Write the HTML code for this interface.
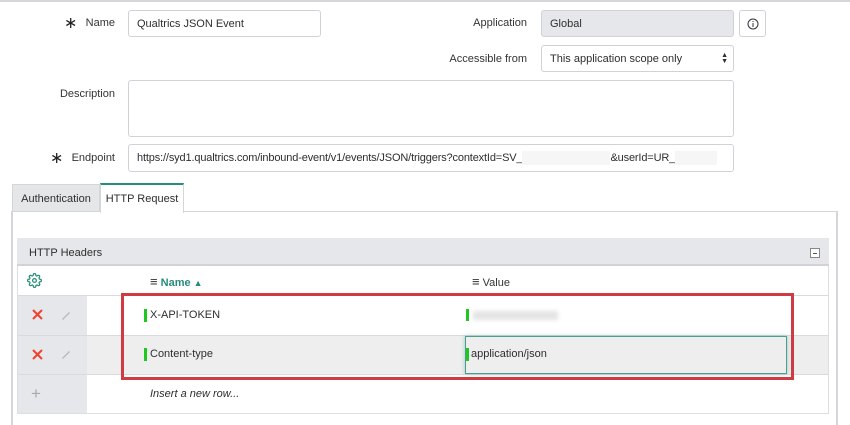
<!DOCTYPE html>
<html><head><meta charset="utf-8"><style>
*{box-sizing:border-box;margin:0;padding:0}
body{width:850px;height:425px;background:#fff;font-family:"Liberation Sans",sans-serif;font-size:11px;color:#2e2e2e;position:relative;overflow:hidden}
.a{position:absolute}
.lbl{position:absolute;text-align:right;font-size:11px;color:#333}
.inp{position:absolute;border:1px solid #cfd2d6;border-radius:3px;background:#fff;padding-left:8px;font-size:11px;display:flex;align-items:center;white-space:nowrap;overflow:hidden}
.star{position:absolute;font-size:16px;line-height:16px;color:#222;font-weight:300}
</style></head><body>
<div class="a" style="left:0;top:0;width:850px;height:2px;background:#d4d6d9"></div>

<span class="star" style="left:64px;top:16px">&#x2217;</span>
<div class="lbl" style="left:60px;top:17px;width:55px">Name</div>
<div class="inp" style="left:128px;top:10px;width:193px;height:27px">Qualtrics JSON Event</div>

<div class="lbl" style="left:420px;top:17px;width:107px">Application</div>
<div class="inp" style="left:541px;top:10px;width:193px;height:27px;background:#e6e7ea">Global</div>
<div class="inp" style="left:739px;top:10px;width:27px;height:27px;padding:0;justify-content:center"><svg width="12" height="12" viewBox="0 0 12 12"><circle cx="6" cy="6" r="5" fill="none" stroke="#333" stroke-width="1"/><rect x="5.5" y="5" width="1" height="4" fill="#333"/><rect x="5.5" y="3" width="1" height="1" fill="#333"/></svg></div>

<div class="lbl" style="left:400px;top:53px;width:127px">Accessible from</div>
<div class="inp" style="left:541px;top:45px;width:193px;height:27px">This application scope only<span class="a" style="right:5px;top:7px;font-size:7px;line-height:6px">&#9650;<br>&#9660;</span></div>

<div class="lbl" style="left:40px;top:88px;width:75px">Description</div>
<div class="inp" style="left:128px;top:80px;width:606px;height:57px"></div>

<span class="star" style="left:50px;top:151px">&#x2217;</span>
<div class="lbl" style="left:60px;top:152px;width:55px">Endpoint</div>
<div class="inp" style="left:128px;top:144px;width:606px;height:28px;letter-spacing:-0.15px">https://syd1.qualtrics.com/inbound-event/v1/events/JSON/triggers?contextId=SV_<span style="display:inline-block;width:88px;height:14px;background:#f6f6f6"></span>&amp;userId=UR_<span style="display:inline-block;width:42px;height:14px;background:#f6f6f6"></span></div>

<!-- tabs -->
<div class="a" style="left:12px;top:184px;width:88px;height:28px;background:#e5e6e8;border:1px solid #d4d6d9;border-bottom:none;display:flex;align-items:center;justify-content:center">Authentication</div>
<div class="a" style="left:12px;top:211px;width:88px;height:1px;background:#d4d6d9"></div>
<div class="a" style="left:100px;top:183px;width:84px;height:30px;background:#fff;border:1px solid #d4d6d9;border-top:2px solid #278c7a;border-bottom:none;display:flex;align-items:center;justify-content:center">HTTP Request</div>
<div class="a" style="left:184px;top:211px;width:654px;height:1px;background:#d4d6d9"></div>
<div class="a" style="left:11px;top:211px;width:2px;height:214px;background:#d4d6d9"></div>
<div class="a" style="left:836px;top:211px;width:2px;height:214px;background:#d4d6d9"></div>

<!-- panel -->
<div class="a" style="left:17px;top:238px;width:812px;height:176px;border:1px solid #dcdee1;background:#fff"></div>
<div class="a" style="left:17px;top:238px;width:812px;height:28px;background:#e6e7ea;border-bottom:2px solid #d0d2d5"></div>
<div class="a" style="left:29px;top:247px">HTTP Headers</div>
<div class="a" style="left:810px;top:248px;width:10px;height:10px;border:1px solid #888;background:#fff"><div style="margin:3.5px 2px;height:1px;background:#555"></div></div>

<svg class="a" style="left:27px;top:273px" width="15" height="15" viewBox="0 0 24 24" fill="none" stroke="#278c7a" stroke-width="2"><circle cx="12" cy="12" r="3"/><path d="M19.4 15a1.65 1.65 0 0 0 .33 1.820l.06.06a2 2 0 1 1-2.83 2.83l-.06-.06a1.65 1.65 0 0 0-1.82-.33 1.65 1.65 0 0 0-1 1.51V21a2 2 0 1 1-4 0v-.09A1.650 1.650 0 0 0 9 19.4a1.65 1.65 0 0 0-1.82.33l-.06.06a2 2 0 1 1-2.83-2.830l.06-.06A1.65 1.65 0 0 0 4.68 15a1.65 1.65 0 0 0-1.51-1H3a2 2 0 1 1 0-4h.09A1.65 1.65 0 0 0 4.6 9a1.65 1.65 0 0 0-.33-1.82l-.06-.06a2 2 0 1 1 2.83-2.83l.06.06A1.65 1.65 0 0 0 9 4.68a1.65 1.65 0 0 0 1-1.51V3a2 2 0 1 1 4 0v.09a1.65 1.65 0 0 0 1 1.51 1.65 1.65 0 0 0 1.82-.33l.06-.06a2 2 0 1 1 2.83 2.83l-.06.06A1.65 1.65 0 0 0 19.4 9a1.65 1.65 0 0 0 1.51 1H21a2 2 0 1 1 0 4h-.09a1.65 1.65 0 0 0-1.51 1z"/></svg>
<div class="a" style="left:150px;top:274px;color:#278c7a;font-weight:bold"><span style="color:#333;font-size:13px">&#8801;</span> Name <span style="font-size:9px">&#9650;</span></div>
<div class="a" style="left:472px;top:274px;color:#333"><span style="font-size:13px">&#8801;</span> Value</div>

<div class="a" style="left:18px;top:295px;width:810px;height:1px;background:#d8dadd"></div>
<div class="a" style="left:18px;top:296px;width:69px;height:117px;background:#e6e7ea"></div>
<div class="a" style="left:87px;top:336px;width:741px;height:39px;background:#eeeeee"></div>
<div class="a" style="left:18px;top:335px;width:810px;height:1px;background:#d8dadd"></div>
<div class="a" style="left:18px;top:374px;width:810px;height:1px;background:#d8dadd"></div>

<svg class="a" style="left:32px;top:309px" width="11" height="11" viewBox="0 0 11 11"><path d="M1 1L10 10M10 1L1 10" stroke="#f0412d" stroke-width="2"/></svg>
<svg class="a" style="left:32px;top:349px" width="11" height="11" viewBox="0 0 11 11"><path d="M1 1L10 10M10 1L1 10" stroke="#f0412d" stroke-width="2"/></svg>
<svg class="a" style="left:60px;top:309px" width="12" height="12" viewBox="0 0 12 12"><path d="M2 10 L9 3 L10 4 L3 11 Z" fill="#bbb"/></svg>
<svg class="a" style="left:60px;top:348px" width="12" height="12" viewBox="0 0 12 12"><path d="M2 10 L9 3 L10 4 L3 11 Z" fill="#bbb"/></svg>
<div class="a" style="left:31px;top:384px;color:#aaa;font-size:17px">+</div>

<div class="a" style="left:144px;top:309px;width:3px;height:13px;background:#1ec81e"></div>
<div class="a" style="left:150px;top:309px">X-API-TOKEN</div>
<div class="a" style="left:144px;top:348px;width:3px;height:13px;background:#1ec81e"></div>
<div class="a" style="left:150px;top:348px">Content-type</div>
<div class="a" style="left:150px;top:388px;font-style:italic">Insert a new row...</div>

<div class="a" style="left:466px;top:309px;width:3px;height:12px;background:#1ec81e"></div>
<div class="a" style="left:473px;top:311px;width:85px;height:9px;background:#e4e4e4;filter:blur(2px)"></div>
<div class="a" style="left:465px;top:336px;width:322px;height:38px;border:1px solid #4a9e8e;box-shadow:0 0 4px rgba(39,140,122,.4)"></div>
<div class="a" style="left:466px;top:348px;width:3px;height:13px;background:#1ec81e"></div>
<div class="a" style="left:471px;top:348px">application/json</div>

<div class="a" style="left:121px;top:293px;width:673px;height:87px;border:3px solid #cf3a43"></div>
</body></html>
